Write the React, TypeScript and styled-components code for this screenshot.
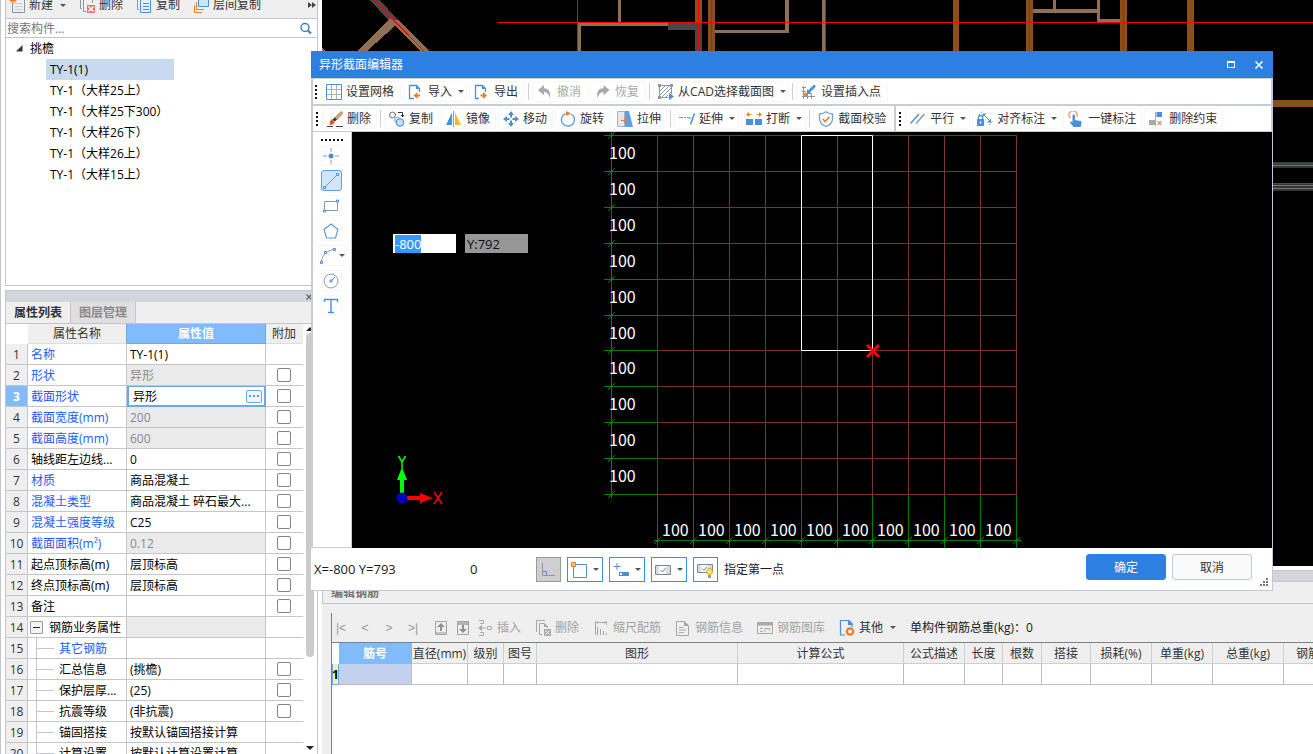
import React, { useEffect, useRef } from "react";
import styled, { createGlobalStyle, css } from "styled-components";

const GlobalStyle = createGlobalStyle`
  * { box-sizing: border-box; }
  body {
    margin: 0;
    background: #fff;
    overflow: hidden;
    color: #1a1a1a;
    font: 12px/16px "Open Sans", "Noto Sans CJK SC", sans-serif;
  }
  button, input { font: inherit; color: inherit; }
`;

const line = "#c4c6cc";
const panel = "#efefef";
const strip = "#d3d5db";
const blue = "#4a90d9";
const orange = "#f07c28";
const steel = "#8b98a3";

/* ---------- icons ---------- */

const Svg = styled.svg.attrs({ width: 16, height: 16, viewBox: "0 0 16 16", fill: "none", "aria-hidden": true })`
  flex: none;
  display: block;
`;

const icons: Record<string, React.ReactNode> = {
  newItem: (
    <>
      <path d="M4 2.500H15.500V15.500H3.500V6" stroke={steel} />
      <path d="M6 6.500h7M6 9.500h7M6 12.500h7" stroke="#c9ced3" />
      <path d="M4 0v7M0.500 3.500h7M1.500 1l5 5M6.500 1l-5 5" stroke={orange} />
    </>
  ),
  removeItem: (
    <>
      <path d="M1.500 1v10.500H3M4.500 1v13.500h3M4.500 1.500h9V6" stroke={steel} />
      <path d="M8 8h8v8H8z" fill="#e57373" />
      <path d="M9.500 9.500l5 5M14.500 9.500l-5 5" stroke="#fff" strokeWidth="1.500" />
    </>
  ),
  copyItem: (
    <>
      <path d="M1.500 1v11.500H3" stroke={steel} />
      <path d="M4.500 1.500h8l2 2v12h-10z" stroke={blue} fill="#e6f1fc" />
      <path d="M7 6.500h6M7 9.500h6M7 12.500h6" stroke={blue} />
    </>
  ),
  copyLayer: (
    <>
      <path d="M5.500 1.500h10v8h-10z" stroke={blue} fill="#cfe4fa" />
      <path d="M3.500 5v7.500H11M1.500 8v7.500H9" stroke={orange} />
    </>
  ),
  grid: (
    <>
      <path d="M5.500 1v14M10.500 1v14M1 5.500h14M1 10.500h14" stroke="#a3b5b5" />
      <path d="M.5.5h15v15H.5z" stroke={blue} />
    </>
  ),
  importFile: (
    <>
      <path d="M6 14.500H1.500V1.500H8.500L11.500 4.500V8" stroke={blue} strokeWidth="1.300" />
      <path d="M8 1v4h4z" fill={blue} />
      <path d="M5.500 11.500l4-3.500v2.500H12v2H9.500V15z" fill={orange} />
    </>
  ),
  exportFile: (
    <>
      <path d="M5 14.500H1.500V1.500H8.500L11.500 4.500V8" stroke={blue} strokeWidth="1.300" />
      <path d="M8 1v4h4z" fill={blue} />
      <path d="M13 11.500L9 8v2.500H6.500v2H9V15z" fill={orange} />
    </>
  ),
  undo: <path d="M1 6L7 1v3.300c4.500 0 6.800 3.500 6 10C12 10.500 10.500 8 7 8v3.200z" fill="#a9a9a9" />,
  redo: <path d="M14.500 6L8.500 1v3.300C4 4.300 1 7.500 2.500 14.300 3.500 10.500 5 8 8.500 8v3.200z" fill="#a9a9a9" />,
  cadSelect: (
    <>
      <path d="M2 7L7 2M2 11L11 2M3 14L14 3M7 14L14 7" stroke={steel} />
      <path d="M1.500 1.500h12v12h-12z" stroke={steel} />
      <path d="M0 0h3v3H0zM12 0h3v3h-3zM0 12h3v3H0z" fill="#8b98a3" />
      <path d="M10 8v8h6v-4z" fill="#fff" />
      <path d="M11 9v7l5-3.500z" fill={blue} />
    </>
  ),
  insertPoint: (
    <>
      <path d="M2.500 2v13M6.500 7v8M10.500 10v5M1 3.500h4M1 7.500h4M1 12.500h13" stroke={steel} />
      <path d="M14 1.500L7.500 8" stroke={blue} strokeWidth="2.600" />
      <path d="M6 5v5h5z" fill={blue} />
      <circle cx="5" cy="10.500" r="2" fill={orange} />
    </>
  ),
  brush: (
    <>
      <path d="M14.800.8c1 .8.500 2-.5 3.200L9.500 9 7.500 7l5-5C13.500 1 14.300.4 14.800.8z" fill="#d9a877" stroke="#7a5233" strokeWidth=".6" />
      <path d="M7.800 6.500l2 2-2 2.300-2.400-2.400z" fill="#3a3a3a" />
      <path d="M5 8.200l2.500 2.500c0 2.500-2.500 3.300-5 3 .3-2.800.5-4.800 2.500-5.500z" fill="#e2561e" />
      <path d="M0 15.500h6M9 15.500h7" stroke="#444" />
    </>
  ),
  copy: (
    <>
      <circle cx="3.500" cy="4" r="3" stroke="#6d7780" fill="#eef0f2" />
      <circle cx="8.500" cy="9" r="2.800" stroke="#8fa0ad" fill="#eef4fa" />
      <circle cx="11" cy="11.500" r="3.800" stroke="#3a8ed0" fill="#bfe0fa" />
      <path d="M9 1.500h4.500V5" stroke="#333" />
      <path d="M11.500 4h4l-2 2.500z" fill="#333" />
    </>
  ),
  mirror: (
    <>
      <path d="M6 1.500V14H0z" fill={blue} />
      <path d="M7.500 0v16" stroke="#999" />
      <path d="M9 1.500V14h6z" fill="#fbb829" />
    </>
  ),
  move: (
    <>
      <path d="M8 0l3 4H5zM8 16l3-4H5zM0 8l4-3v6zM16 8l-4-3v6z" fill={blue} />
      <path d="M8 3v3.500M8 9.500V13M3 8h3.500M9.500 8H13" stroke={blue} strokeWidth="2" />
    </>
  ),
  rotate: (
    <>
      <path d="M11 3a6.500 6.500 0 1 1-5.500-.3" stroke="#5b9bd8" strokeWidth="1.300" />
      <path d="M6 0l5 2.500L6 5z" fill={orange} />
    </>
  ),
  stretch: (
    <>
      <path d="M.5.5h7v15h-7z" fill="#e6e8ea" stroke="#a9b0b6" />
      <path d="M8 0h4l4 16H8z" fill="#5b9fe8" />
      <path d="M4 9.500H8" stroke={orange} strokeWidth="1.200" />
      <path d="M7.500 7l3.500 2.500L7.500 12z" fill={orange} />
    </>
  ),
  extend: (
    <>
      <path d="M0 6.500h4M5 6.500h2M8 6.500h2" stroke={steel} />
      <path d="M15.500 2.500l-4 11" stroke={blue} strokeWidth="1.500" />
      <path d="M9.500 7h3" stroke={blue} />
    </>
  ),
  split: (
    <>
      <path d="M0 3.500L3 1v2h2.500v1H3v2zM16 3.500L13 1v2h-2.500v1H13v2z" fill="#e08a1e" />
      <path d="M0 8h7v6H0zM9 8h7v6H9z" fill={blue} />
    </>
  ),
  shield: (
    <>
      <path d="M8 .8c2 1.500 4 2 6.500 2.200V8c0 4-3 6-6.500 7.500C4.500 14 1.500 12 1.500 8V3C4 2.800 6 2.300 8 .8z" stroke="#6aa5dc" strokeWidth="1.300" />
      <path d="M4.800 8l2.400 2.500 4.300-4.700" stroke={orange} strokeWidth="1.600" />
    </>
  ),
  parallel: (
    <>
      <path d="M.5 12.500L9 3" stroke={blue} strokeWidth="1.500" />
      <path d="M6 12.500L14.500 3" stroke={steel} strokeWidth="1.500" />
    </>
  ),
  align: (
    <>
      <path d="M0 8h7v7H0z" fill={blue} />
      <path d="M1.500 8V6.500a2 2 0 0 1 4 0V8" stroke={blue} strokeWidth="1.300" />
      <path d="M3.500 10.500v2" stroke="#fff" strokeWidth="1.500" />
      <path d="M2 4l4-4M12 14l4-4" stroke={steel} strokeDasharray="2 1" />
      <path d="M7 4l6 6" stroke={blue} />
      <path d="M5.500 2.500h4l-4 4zM14 11.500v-4l-4 4z" fill={blue} />
    </>
  ),
  touch: (
    <>
      <path d="M2.500 7a4 4 0 1 1 6-1" stroke="#f2a27c" strokeWidth="1.500" />
      <path d="M4.500 4.500c0-1.500 2.500-1.500 2.500 0V9l5.500 1c1 .3 1.300 1 1 2l-.8 4H5.500L2 11.500c0-1 1-1.300 2.500-.3z" fill={blue} />
    </>
  ),
  unconstrain: (
    <>
      <path d="M0 9h6v5H0z" fill="#a6a9b4" />
      <path d="M6.500 1v14" stroke="#f0a030" />
      <path d="M7.500 1H13v5H7.500z" fill={blue} />
      <path d="M8.500 10l4 4M12.500 10l-4 4" stroke="#d64a3a" />
    </>
  ),
  point: (
    <>
      <path d="M8 0v4M8 12v4M0 8h4M12 8h4" stroke={steel} />
      <circle cx="8" cy="8" r="2.500" fill={blue} />
    </>
  ),
  line: (
    <>
      <path d="M2 14L14 2" stroke={steel} />
      <path d="M.5 13.500h2v2h-2zM13.500.5h2v2h-2z" stroke={blue} fill="#fff" />
    </>
  ),
  rect: (
    <>
      <path d="M1.500 3.500h13v9h-13z" stroke={steel} />
      <path d="M.5 12h2v2h-2zM13.500 2h2v2h-2z" stroke={blue} fill="#fff" />
    </>
  ),
  pentagon: <path d="M8 1l7 5.500-2.500 8.500h-9L1 6.500z" stroke="#5b9bd8" strokeWidth="1.200" />,
  arc: (
    <>
      <path d="M1.500 14C2 7 7 2.500 14 1.500" stroke={steel} />
      <path d="M.5 13.500h2v2h-2zM4.500 3.500h2v2h-2zM13.500.5h2v2h-2z" stroke={blue} fill="#fff" />
    </>
  ),
  circle: (
    <>
      <circle cx="8" cy="8" r="7" stroke={steel} />
      <path d="M9 7l3-3" stroke={blue} />
      <path d="M7 7h2v2H7z" stroke={blue} fill="#fff" />
    </>
  ),
  textTool: <path d="M1.500 4V1.500h13V4M8 1.500v13M5 14.500h6" stroke={blue} strokeWidth="1.400" />,
  corner: (
    <>
      <path d="M2.500 1v12.500H15" stroke={steel} />
      <path d="M2.500 9.500h4v4" stroke={blue} />
    </>
  ),
  squareSnap: (
    <>
      <path d="M2.500 2.500h13v13h-13z" stroke={blue} />
      <path d="M.5.5h4v4h-4z" stroke={orange} fill="#f7b98f" />
    </>
  ),
  plusBox: (
    <>
      <path d="M4 1v7M.5 4.500h7" stroke={blue} />
      <path d="M6 10h10v4H6z" fill={blue} />
      <path d="M7 11h2v2H7z" fill="#fff" />
    </>
  ),
  tickBox: (
    <>
      <path d="M.5 3.500h15v9H.5z" stroke="#7b8790" fill="#d9dde0" />
      <path d="M4 4h7v8H4z" fill="#fff" />
      <path d="M5.500 8l2 2 3-4" stroke={blue} />
    </>
  ),
  tickBulb: (
    <>
      <path d="M.5 2.500h15v8H.5z" stroke="#7b8790" fill="#d9dde0" />
      <path d="M4 3h7v7H4z" fill="#fff" />
      <path d="M5 6.500l2 2 3-4" stroke={blue} />
      <circle cx="12.500" cy="9.500" r="3" fill="#ffe27a" stroke="#d9a520" />
      <path d="M11 13h3v3h-3z" fill="#9b9b9b" />
    </>
  ),
  moveUp: (
    <>
      <path d="M2.500 1.500h11v13h-11z" stroke="#a3a3a3" />
      <path d="M3 12h10v2H3z" fill="#c4c4c4" />
      <path d="M8 3l4 4H9v4H7V7H4z" fill="#8f8f8f" />
    </>
  ),
  moveDown: (
    <>
      <path d="M2.500 1.500h11v13h-11z" stroke="#a3a3a3" />
      <path d="M3 2h10v3H3z" fill="#b4b4b4" />
      <path d="M8 13L4 9h3V5h2v4h3z" fill="#8f8f8f" />
    </>
  ),
  insertRow: (
    <>
      <path d="M2 .5h4.500v3H3M2 15.500h4.500v-3H3" stroke="#a9a9a9" />
      <path d="M5 5v6L1 8zM4 7.500h5v1H4z" fill="#a9a9a9" />
      <path d="M10.500 6.500h4v3h-4z" stroke="#a9a9a9" />
    </>
  ),
  deleteRow: (
    <>
      <path d="M1.500 12V.5H10M7 14.500H4.500v-11h5l3 3V8" stroke="#a9a9a9" />
      <path d="M9 3v4h4zM9 9h7v7H9z" fill="#a9a9a9" />
      <path d="M10.500 10.500l4 4M14.500 10.500l-4 4" stroke="#fff" />
    </>
  ),
  scaleRebar: (
    <>
      <path d="M2.500 1v14M4.500 7v8M7.500 9v6M10.500 11v4M13.500 13v2M13.500 1v4M4 2.500h8" stroke="#a9a9a9" />
      <path d="M3 2.500l2-1.500v3zM13 2.500L11 1v3z" fill="#a9a9a9" />
    </>
  ),
  rebarInfo: (
    <>
      <path d="M1.500 1.500h8l4 4v10h-12z" stroke="#a9a9a9" />
      <path d="M9 1v5h5zM4 7h4v1H4zM4 9.500h7v1H4zM4 12h5v1H4z" fill="#a9a9a9" />
    </>
  ),
  rebarLib: (
    <>
      <path d="M.5 2.500h15v11H.5z" stroke="#a9a9a9" />
      <path d="M1 3h14v2.500H1z" fill="#a9a9a9" />
      <path d="M3 8.500h3M3 11.500h3M8 11.500v-3h5v2" stroke="#a9a9a9" />
    </>
  ),
  other: (
    <>
      <path d="M6 15H1.500V.5H10L13 3.500V7" stroke={blue} strokeWidth="1.200" />
      <path d="M9 0v5h5z" fill={blue} />
      <circle cx="11" cy="11.500" r="3" stroke={orange} strokeWidth="2" />
      <path d="M11 7v2M11 14v2M6.500 11.500h2M13.500 11.500h2M8 8.500l1 1M13 13.500l1 1M14 8.500l-1 1M9 13.500l-1 1" stroke={orange} strokeWidth="1.400" />
    </>
  ),
  search: (
    <>
      <circle cx="7" cy="6.500" r="4" stroke="#2f86bd" strokeWidth="1.400" />
      <path d="M10 9.500l3 3" stroke="#2f86bd" strokeWidth="2.200" />
    </>
  ),
};

const Icon = ({ name }: { name: string }) => <Svg>{icons[name]}</Svg>;

const Caret = styled.span`
  flex: none;
  border: 3px solid transparent;
  border-top-color: #555;
  border-bottom: 0;
`;

/* ---------- shell ---------- */

const Shell = styled.main`
  position: relative;
  display: grid;
  grid-template-columns: 322px minmax(0, 1fr);
  height: 100vh;
  overflow: hidden;
`;

const LeftColumn = styled.aside`
  display: flex;
  flex-direction: column;
  gap: 4px;
  min-height: 0;
  padding: 0 4px;
  border-left: 1px solid ${line};
`;

const RightColumn = styled.div`
  display: flex;
  flex-direction: column;
  min-width: 0;
  min-height: 0;
`;

/* ---------- component list ---------- */

const ListPanel = styled.section`
  display: flex;
  flex-direction: column;
  height: 286px;
  flex: none;
  border: 1px solid ${line};
  border-top: 0;
`;

const ListToolbar = styled.div`
  display: flex;
  align-items: flex-end;
  height: 19px;
  flex: none;
  gap: 13px;
  padding: 0 0 1px 3px;
  overflow: hidden;
  background: ${panel};
  border-bottom: 1px solid ${line};
`;

const FlatButton = styled.button<{ $off?: boolean }>`
  display: flex;
  align-items: center;
  gap: 4px;
  flex: none;
  height: 24px;
  padding: 0;
  border: 0;
  background: none;
  white-space: nowrap;
  color: ${(p) => (p.$off ? "#a3a3a3" : "#333")};
  ${Caret} { margin-left: 3px; }
`;

const MoreButton = styled(FlatButton)`
  margin-left: auto;
  padding-right: 1px;
`;

const SearchRow = styled.label`
  display: flex;
  align-items: center;
  height: 19px;
  flex: none;
  padding: 1px 3px 0 1px;
  border-bottom: 1px solid ${line};
`;

const SearchInput = styled.input`
  flex: 1;
  min-width: 0;
  padding: 0;
  border: 0;
  outline: 0;
  background: none;
  &::placeholder { color: #777; opacity: 1; }
`;

const Tree = styled.ul`
  margin: 0;
  padding: 0;
  list-style: none;
`;

const TreeRoot = styled.li`
  display: flex;
  align-items: center;
  gap: 7px;
  height: 21px;
  padding-left: 10px;
  color: #000;
`;

const TreeItem = styled.li<{ $on?: boolean }>`
  width: 128px;
  height: 21px;
  margin-left: 40px;
  padding-left: 4px;
  line-height: 21px;
  white-space: nowrap;
  color: #000;
  background: ${(p) => (p.$on ? "#c8d9f0" : "none")};
`;

/* ---------- property panel ---------- */

const PropPanel = styled.section`
  display: flex;
  flex-direction: column;
  flex: 1;
  min-height: 0;
  border: 1px solid ${line};
  border-bottom: 0;
`;

const PropStrip = styled.div`
  display: flex;
  justify-content: flex-end;
  align-items: center;
  height: 11px;
  flex: none;
  padding-right: 5px;
  background: ${strip};
`;

const StripClose = styled.button`
  display: block;
  padding: 0;
  border: 0;
  background: none;
  line-height: 0;
`;

const Tabs = styled.div`
  display: flex;
  height: 22px;
  flex: none;
  background: ${panel};
  border-bottom: 1px solid ${line};
`;

const Tab = styled.button<{ $on?: boolean }>`
  width: 65px;
  padding: 0;
  border: 0;
  border-right: 1px solid ${line};
  font-weight: 700;
  color: ${(p) => (p.$on ? "#333" : "#8a8a8a")};
  background: ${(p) => (p.$on ? panel : "#dfdfe1")};
`;

const PropBody = styled.div`
  display: flex;
  flex: 1;
  min-height: 0;
  overflow: hidden;
`;

const PropTable = styled.table`
  width: 297px;
  flex: none;
  align-self: flex-start;
  table-layout: fixed;
  border-collapse: separate;
  border-spacing: 0;
`;

const PropHead = styled.th<{ $on?: boolean; $blank?: boolean; $edge?: boolean }>`
  height: 20px;
  padding: 1px 0 0;
  font-weight: ${(p) => (p.$on ? 700 : 400)};
  color: ${(p) => (p.$on ? "#fff" : "#333")};
  background: ${(p) => (p.$on ? "#80bbfb" : p.$blank ? "#fff" : panel)};
  border-right: 1px solid ${(p) => (p.$on || p.$edge ? "#6ca8e6" : "transparent")};
  border-bottom: 1px solid ${(p) => (p.$on ? "#6ca8e6" : p.$blank ? "#fff" : "#dcdde0")};
`;

const RowNumber = styled.th<{ $on?: boolean }>`
  height: 21px;
  padding: 1px 0 0;
  font-weight: ${(p) => (p.$on ? 700 : 400)};
  color: ${(p) => (p.$on ? "#fff" : "#333")};
  background: ${(p) => (p.$on ? "#80bbfb" : panel)};
  border-right: 1px solid ${line};
  border-bottom: 1px solid ${line};
`;

const Cell = styled.td<{ $kind?: "link" | "off" | "plain"; $tree?: boolean }>`
  height: 21px;
  padding: ${(p) => (p.$tree ? 0 : 1)}px 0 0 3px;
  overflow: hidden;
  text-overflow: ellipsis;
  white-space: nowrap;
  color: ${(p) => (p.$kind === "link" ? "#1a5cff" : p.$kind === "off" ? "#8a8a8a" : "#000")};
  background: ${(p) => (p.$kind === "off" ? "#eaeaea" : "#fff")};
  border-right: 1px solid ${line};
  border-bottom: 1px solid ${line};
`;

const CheckCell = styled.td`
  padding: 0 1px 0 0;
  border-bottom: 1px solid ${line};
`;

const Check = styled.input.attrs({ type: "checkbox" })`
  display: block;
  appearance: none;
  width: 14px;
  height: 14px;
  margin: 0 auto;
  border: 1px solid #858585;
  border-radius: 2px;
  background: #fff;
`;

const EditCell = styled.td`
  padding: 0;
  border: 2px solid #6ca8e6;
  border-top-width: 1px;
`;

const EditBox = styled.div`
  display: flex;
  align-items: center;
  height: 18px;
  padding: 0 2px 0 4px;
`;

const EditInput = styled.input`
  flex: 1;
  min-width: 0;
  height: 18px;
  padding: 0;
  border: 0;
  outline: 0;
  background: none;
  color: #000;
`;

const DotsButton = styled.button`
  display: flex;
  align-items: center;
  justify-content: center;
  gap: 2px;
  width: 16px;
  height: 13px;
  padding: 0 0 1px;
  border: 1px solid #6ca8e6;
  border-radius: 2px;
  background: #eef5fd;
  i { width: 2px; height: 2px; background: #5b9bd8; }
`;

const NameBox = styled.span`
  display: flex;
  align-items: center;
  height: 20px;
`;

const Expander = styled.button`
  display: flex;
  align-items: center;
  justify-content: center;
  width: 13px;
  height: 13px;
  margin: 0 6px 0 -1px;
  padding: 0;
  flex: none;
  border: 1px solid #999;
  border-radius: 1px;
  background: #f4f4f4;
  &::after { content: ""; width: 7px; height: 1px; background: #222; }
`;

const Branch = styled.span`
  flex: none;
  width: 18px;
  height: 20px;
  margin: 0 5px;
  background:
    linear-gradient(${line}, ${line}) 0 0 / 1px 20px no-repeat,
    linear-gradient(${line}, ${line}) 0 10px / 18px 1px no-repeat;
`;

const ClipText = styled.span`
  padding-top: 1px;
  overflow: hidden;
  text-overflow: ellipsis;
`;

const ScrollRail = styled.div`
  display: flex;
  flex-direction: column;
  justify-content: space-between;
  align-items: center;
  flex: 1;
  padding: 3px 1px 4px 0;
`;

const ScrollThumb = styled.div`
  width: 8px;
  height: 324px;
  margin: 2px 0 auto;
  border-radius: 4px;
  background: #cbcbcb;
`;

const ScrollArrow = styled.span<{ $up?: boolean }>`
  border: 4px solid transparent;
  ${(p) =>
    p.$up
      ? css`border-bottom-color: #222; border-top: 0;`
      : css`border-top-color: #222; border-bottom: 0;`}
`;

/* ---------- drawing view and rebar panel ---------- */

const CadView = styled.svg`
  display: block;
  width: 100%;
  flex: 1;
  min-height: 0;
  background: #000;
`;

const RebarPanel = styled.section`
  height: 188px;
  flex: none;
  padding-top: 4px;
  background: #fff;
`;

const RebarStrip = styled.div`
  height: 12px;
  background: ${strip};
  border: 1px solid ${line};
  border-right: 0;
`;

const RebarTitle = styled.h2`
  height: 22px;
  margin: 0;
  padding: 3px 0 0 8px;
  font-size: 12px;
  line-height: 16px;
  font-weight: 700;
  color: #777;
  background: ${panel};
  border-left: 1px solid ${line};
  border-bottom: 1px solid ${line};
`;

const RebarBody = styled.div`
  height: 150px;
  padding: 9px 0 0 9px;
  background: ${panel};
`;

const RebarFrame = styled.div`
  height: 141px;
  border-left: 1px solid #7c8288;
  overflow: hidden;
`;

const RebarToolbar = styled.div`
  display: flex;
  align-items: center;
  height: 29px;
  gap: 14px;
  padding: 0 0 0 3px;
  white-space: nowrap;
`;

const NavGroup = styled.div`
  display: flex;
  gap: 6px;
`;

const NavButton = styled(FlatButton)`
  justify-content: center;
  width: 16px;
  color: #999;
`;

const NavSteps = styled.div`
  display: flex;
  gap: 12px;
`;

const StepButton = styled(FlatButton)`
  justify-content: center;
  width: 12px;
  color: #999;
  font-family: "Liberation Sans", sans-serif;
`;

const RebarTableWrap = styled.div`
  height: 112px;
  background: #fff;
  border-top: 1px solid #7c8288;
  overflow: hidden;
`;

const RebarTable = styled.table`
  width: 1025px;
  table-layout: fixed;
  border-collapse: separate;
  border-spacing: 0;
`;

const RebarHead = styled.th<{ $on?: boolean }>`
  height: 21px;
  padding: 1px 0 0;
  white-space: nowrap;
  overflow: hidden;
  font-weight: ${(p) => (p.$on ? 700 : 400)};
  color: ${(p) => (p.$on ? "#fff" : "#333")};
  background: ${(p) => (p.$on ? "#80bbfb" : panel)};
  border-right: 1px solid ${(p) => (p.$on ? "#80bbfb" : "#cfcfcf")};
  border-bottom: 1px solid ${(p) => (p.$on ? "#80bbfb" : "#cfcfcf")};
`;

const RebarGutter = styled.th<{ $head?: boolean }>`
  height: 21px;
  padding: 0;
  color: #000;
  background: ${(p) => (p.$head ? "#fff" : "#ffefb0")};
  box-shadow: ${(p) => (p.$head ? "none" : "inset 1px 0 #6ca8e6, inset -1px -1px #6ca8e6")};
`;

const RebarCell = styled.td<{ $on?: boolean }>`
  height: 21px;
  padding: 0;
  background: ${(p) => (p.$on ? "#c2d1ee" : "#fff")};
  border-right: 1px solid #bdbdbd;
  border-bottom: 1px solid #bdbdbd;
`;

/* ---------- dialog ---------- */

const Dialog = styled.section`
  position: absolute;
  left: 311px;
  right: 40px;
  top: 51px;
  background: #fff;
  border-right: 1px solid #bfc8dc;
  border-bottom: 1px solid #bfc8dc;
`;

const DialogTitle = styled.header`
  display: flex;
  align-items: center;
  height: 27px;
  margin-right: -1px;
  padding: 0 9px 0 8px;
  color: #fff;
  background: #2d7fe1;
  h1 { margin: 0 auto 0 0; font-size: 12px; line-height: 16px; font-weight: 400; }
`;

const WindowButton = styled.button`
  display: block;
  margin-left: 19px;
  padding: 0;
  border: 0;
  background: none;
  line-height: 0;
`;

const DialogBody = styled.div`
  border-left: 2px solid #c9ccd3;
`;

const Toolbar = styled.div<{ $last?: boolean }>`
  display: flex;
  align-items: center;
  gap: 2px;
  height: ${(p) => (p.$last ? 26 : 28)}px;
  padding-left: ${(p) => (p.$last ? 2 : 1)}px;
  border: solid #c9ccd0;
  border-width: ${(p) => (p.$last ? "0 1px 1px 0" : "1px 1px 2px 0")};
`;

const Grip = styled.span<{ $across?: boolean }>`
  flex: none;
  width: ${(p) => (p.$across ? 22 : 2)}px;
  height: ${(p) => (p.$across ? 2 : 14)}px;
  margin: ${(p) => (p.$across ? "0 0 0 8px" : "0 2px 0 1px")};
  background: repeating-linear-gradient(
    ${(p) => (p.$across ? "to right" : "to bottom")}, #111 0 2px, transparent 2px 4px);
`;

const Divider = styled.span<{ $thick?: boolean }>`
  flex: none;
  width: ${(p) => (p.$thick ? 2 : 1)}px;
  height: ${(p) => (p.$thick ? 25 : 17)}px;
  margin: 0 ${(p) => (p.$thick ? 0 : 1)}px;
  background: ${(p) => (p.$thick ? "#c9ccd3" : "#cfcfcf")};
`;

const ToolButton = styled.button<{ $off?: boolean; $drop?: boolean; $tight?: boolean }>`
  display: flex;
  align-items: center;
  gap: 4px;
  flex: none;
  height: 21px;
  padding: 0 ${(p) => (p.$drop ? (p.$tight ? 3 : 2) : p.$tight ? 5 : 6)}px 0 4px;
  border: 1px solid #f6f6f6;
  border-radius: 3px;
  background: #fff;
  white-space: nowrap;
  color: ${(p) => (p.$off ? "#aaa" : "#333")};
  ${Caret} { margin-left: 2px; }
`;

const Workspace = styled.div`
  display: flex;
  min-height: 416px;
`;

const SideBar = styled.div`
  display: flex;
  flex-direction: column;
  align-items: flex-start;
  gap: 4px;
  width: 39px;
  flex: none;
  padding-top: 7px;
  border-right: 1px solid #c9ccd3;
  border-bottom: 1px solid #c9ccd3;
`;

const SideButton = styled.button<{ $on?: boolean; $wide?: boolean }>`
  display: flex;
  align-items: center;
  gap: 3px;
  width: ${(p) => (p.$wide ? 28 : 21)}px;
  height: 21px;
  margin-left: ${(p) => (p.$wide ? 5 : 8)}px;
  padding: 0 0 0 1px;
  border: 1px solid ${(p) => (p.$on ? "#5b9fe8" : "#f6f6f6")};
  border-radius: 3px;
  background: ${(p) => (p.$on ? "#cfe6fc" : "#fff")};
`;

const CanvasBox = styled.div`
  position: relative;
  flex: 1;
  min-width: 0;
  background: #000;
`;

const Canvas = styled.svg`
  display: block;
  width: 100%;
  height: 416px;
  text { font-family: "Noto Sans CJK SC", sans-serif; font-size: 16px; fill: #fff; }
`;

const CoordInputs = styled.div`
  position: absolute;
  left: 41px;
  top: 102px;
  display: flex;
  gap: 9px;
`;

const CoordInput = styled.input<{ $off?: boolean }>`
  width: 63px;
  height: 19px;
  padding: 0 2px;
  border: 0;
  outline: 0;
  font-size: 13px;
  color: #111;
  background: ${(p) => (p.$off ? "#969696" : "#fff")};
  &::selection { color: #fff; background: #3399ff; }
`;

const Footer = styled.footer`
  position: relative;
  display: flex;
  align-items: flex-start;
  gap: 6px;
  height: 42px;
  padding: 6px 20px 0 3px;
`;

const Coords = styled.output`
  width: 150px;
  padding-top: 7px;
  font-size: 13px;
  white-space: nowrap;
`;

const Count = styled(Coords)`
  width: 60px;
`;

const Hint = styled.p`
  margin: 0 auto 0 0;
  padding-top: 8px;
`;

const SnapButton = styled.button<{ $on?: boolean; $drop?: boolean }>`
  display: flex;
  align-items: center;
  gap: 6px;
  width: ${(p) => (p.$drop ? 36 : 25)}px;
  height: 25px;
  margin-top: 3px;
  padding: 0 3px;
  flex: none;
  border: 1px solid ${(p) => (p.$on ? "#9a9a9a" : "#3390ee")};
  background: ${(p) => (p.$on ? "#cfcfcf" : "#fff")};
`;

const ActionButton = styled.button<{ $main?: boolean }>`
  width: 80px;
  height: 26px;
  padding: 1px 0 0;
  flex: none;
  border: 1px solid ${(p) => (p.$main ? "#2d7fe1" : "#bfc8dc")};
  border-radius: 3px;
  color: ${(p) => (p.$main ? "#fff" : "#333")};
  background: ${(p) => (p.$main ? "#2d7fe1" : "#fafafa")};
`;

const ResizeGrip = styled.svg`
  position: absolute;
  right: 4px;
  bottom: 4px;
`;

/* ---------- data ---------- */

const members = ["TY-1(1)", "TY-1（大样25上）", "TY-1（大样25下300）", "TY-1（大样26下）", "TY-1（大样26上）", "TY-1（大样15上）"];

type Prop = { name: string; value: string; link?: boolean; off?: boolean; check?: boolean; level?: "group" | "child" };

const props: Prop[] = [
  { name: "名称", value: "TY-1(1)", link: true },
  { name: "形状", value: "异形", link: true, off: true, check: true },
  { name: "截面形状", value: "异形", link: true, check: true },
  { name: "截面宽度(mm)", value: "200", link: true, off: true, check: true },
  { name: "截面高度(mm)", value: "600", link: true, off: true, check: true },
  { name: "轴线距左边线...", value: "0", check: true },
  { name: "材质", value: "商品混凝土", link: true, check: true },
  { name: "混凝土类型", value: "商品混凝土 碎石最大...", link: true, check: true },
  { name: "混凝土强度等级", value: "C25", link: true, check: true },
  { name: "截面面积(m²)", value: "0.12", link: true, off: true, check: true },
  { name: "起点顶标高(m)", value: "层顶标高", check: true },
  { name: "终点顶标高(m)", value: "层顶标高", check: true },
  { name: "备注", value: "", check: true },
  { name: "钢筋业务属性", value: "", off: true, level: "group" },
  { name: "其它钢筋", value: "", link: true, level: "child" },
  { name: "汇总信息", value: "(挑檐)", check: true, level: "child" },
  { name: "保护层厚...", value: "(25)", check: true, level: "child" },
  { name: "抗震等级", value: "(非抗震)", check: true, level: "child" },
  { name: "锚固搭接", value: "按默认锚固搭接计算", level: "child" },
  { name: "计算设置", value: "按默认计算设置计算", level: "child" },
];

const rebarColumns: [string, number][] = [
  ["筋号", 73], ["直径(mm)", 56], ["级别", 36], ["图号", 33], ["图形", 201], ["计算公式", 166],
  ["公式描述", 61], ["长度", 38], ["根数", 39], ["搭接", 49], ["损耗(%)", 61], ["单重(kg)", 61],
  ["总重(kg)", 71], ["钢筋归类", 73],
];

type Tool = { icon?: string; text?: string; off?: boolean; drop?: boolean; divider?: boolean; group?: boolean };

const fileTools: Tool[] = [
  { icon: "grid", text: "设置网格" },
  { icon: "importFile", text: "导入", drop: true },
  { icon: "exportFile", text: "导出" },
  { divider: true },
  { icon: "undo", text: "撤消", off: true },
  { icon: "redo", text: "恢复", off: true },
  { divider: true },
  { icon: "cadSelect", text: "从CAD选择截面图", drop: true },
  { divider: true },
  { icon: "insertPoint", text: "设置插入点" },
];

const editTools: Tool[] = [
  { icon: "brush", text: "删除" },
  { divider: true },
  { icon: "copy", text: "复制" },
  { icon: "mirror", text: "镜像" },
  { icon: "move", text: "移动" },
  { icon: "rotate", text: "旋转" },
  { icon: "stretch", text: "拉伸" },
  { divider: true },
  { icon: "extend", text: "延伸", drop: true },
  { icon: "split", text: "打断", drop: true },
  { divider: true },
  { icon: "shield", text: "截面校验" },
  { group: true },
  { icon: "parallel", text: "平行", drop: true },
  { icon: "align", text: "对齐标注", drop: true },
  { icon: "touch", text: "一键标注" },
  { icon: "unconstrain", text: "删除约束" },
];

const drawTools = ["point", "line", "rect", "pentagon", "arc", "circle", "textTool"];

/* ---------- parts ---------- */

const Tools = ({ items, tight }: { items: Tool[]; tight?: boolean }) => (
  <>
    <Grip />
    {items.map((t, i) =>
      t.group ? (
        <React.Fragment key={i}>
          <Divider $thick />
          <Grip />
        </React.Fragment>
      ) : t.divider ? (
        <Divider key={i} />
      ) : (
        <ToolButton key={i} $off={t.off} $drop={t.drop} $tight={tight} disabled={t.off}>
          <Icon name={t.icon!} />
          {t.text}
          {t.drop && <Caret />}
        </ToolButton>
      )
    )}
  </>
);

const PropRow = ({ p, n }: { p: Prop; n: number }) => {
  const editing = n === 3;
  return (
    <tr>
      <RowNumber scope="row" $on={editing}>{n}</RowNumber>
      <Cell $kind={p.link ? "link" : "plain"} $tree={!!p.level}>
        {p.level ? (
          <NameBox>
            {p.level === "group" ? <Expander aria-label="收起" /> : <Branch />}
            <ClipText>{p.name}</ClipText>
          </NameBox>
        ) : (
          p.name
        )}
      </Cell>
      {editing ? (
        <EditCell>
          <EditBox>
            <EditInput aria-label={p.name} defaultValue={p.value} />
            <DotsButton aria-label="编辑截面"><i /><i /><i /></DotsButton>
          </EditBox>
        </EditCell>
      ) : (
        <Cell $kind={p.off ? "off" : "plain"}>{p.value}</Cell>
      )}
      <CheckCell>{p.check && <Check aria-label={`附加 ${p.name}`} />}</CheckCell>
    </tr>
  );
};

const tan = "#8f6f55";
const wood = "#8b4f1c";
const slate = "#484848";

const FloorPlan = () => (
  <CadView aria-label="平面图" shapeRendering="crispEdges">
    <path d="M47 -1L57 -1L76 20L68 22z" fill={slate} />
    <path d="M73 20h4L107 51H98L73 26L45 51H35L68 18z" fill={tan} />
    <path d="M0 48l3 3H0z" fill={tan} />
    <path d="M51 -1L102 51" stroke="#f00" />
    <path d="M256 23h90v3H259v25H256zM296 0h3v22h-3zM463 0h4v33H393v-3h70zM500 0h3v51h-3z" fill={tan} />
    <path d="M346 23h34v28h-7V30h-27z" fill={slate} />
    <path d="M373 0h7v22h-7zM386 0h7v51h-7zM631 0h6v51h-6zM704 0h7v51h-7zM798 0h7v51h-7zM865 0h7v51h-7z" fill={wood} />
    <rect x="951" y="100" width="100%" height="7" fill={wood} />
    <path d="M731 0h3v9h41V0h3v19h20v3h-23v-9h-64V9h20z" fill={tan} />
    <path d="M175 22.500H3000M255.500 0v51M376.500 0v51M389.500 0v51M503.500 0v51M707.500 0v51M801.500 0v51" stroke="#f00" />
    <rect x="951" y="162" width="100%" height="6" fill="#333" />
    <rect x="951" y="184" width="100%" height="7" fill="#333" />
    <path d="M951 165H3000M951 185.500H3000M951 188.500H3000" stroke="#777" />
    <path d="M951 163.500H3000M951 183.500H3000" stroke="#f00" />
  </CadView>
);

const steps = Array.from({ length: 11 }, (_, i) => Math.round(i * 35.9));

const SectionDrawing = () => (
  <Canvas aria-label="截面图">
    <g fill="#7a3338">
      {steps.map((s) => (
        <React.Fragment key={s}>
          <rect x={305 + s} y={3} width={1} height={360} />
          <rect x={305} y={3 + s} width={360} height={1} />
        </React.Fragment>
      ))}
    </g>
    <g fill="#008000">
      {steps.map((s) => (
        <React.Fragment key={s}>
          <rect x={252} y={3 + s} width={53} height={1} />
          <rect x={305 + s} y={363} width={1} height={53} />
        </React.Fragment>
      ))}
      <rect x={259} y={0} width={1} height={366} />
      <rect x={302} y={408} width={367} height={1} />
    </g>
    <g stroke="#008000">
      {steps.map((s) => (
        <path key={s} d={`M256 ${7 + s}l7 -7M${302 + s} 412l7 -7`} />
      ))}
    </g>
    {steps.slice(0, 10).map((s) => (
      <React.Fragment key={s}>
        <text x={257} y={27 + s}>100</text>
        <text x={310 + s} y={404}>100</text>
      </React.Fragment>
    ))}
    <path d="M521 218.500H449.500V3.500H520.500V218" stroke="#fff" fill="none" />
    <path d="M515 213l12 12M527 213l-12 12" stroke="#f00" strokeWidth="3" />
    <path d="M48 364V348H45L50 335L55 348H52V364z" fill="#0f0" />
    <path d="M54 364H68V361L81 366L68 371V368H54z" fill="#f00" />
    <circle cx="50" cy="366" r="5.500" fill="#0000c0" />
    <path d="M46.500 324L50 330L53.500 324M50 330V336" stroke="#0f0" strokeWidth="1.500" fill="none" />
    <path d="M82 360L90 372M90 360L82 372" stroke="#f00" strokeWidth="1.500" />
  </Canvas>
);

export default function App() {
  const xInput = useRef<HTMLInputElement>(null);
  useEffect(() => {
    xInput.current?.focus();
    xInput.current?.select();
  }, []);

  return (
    <>
      <GlobalStyle />
      <Shell>
        <LeftColumn>
          <ListPanel>
            <ListToolbar>
              <FlatButton><Icon name="newItem" />新建<Caret /></FlatButton>
              <FlatButton><Icon name="removeItem" />删除</FlatButton>
              <FlatButton><Icon name="copyItem" />复制</FlatButton>
              <FlatButton><Icon name="copyLayer" />层间复制</FlatButton>
              <MoreButton aria-label="更多">
                <svg width="8" height="6" viewBox="0 0 8 6" aria-hidden="true">
                  <path d="M0 0l4 3-4 3zM4 0l4 3-4 3z" fill="#444" />
                </svg>
              </MoreButton>
            </ListToolbar>
            <SearchRow>
              <SearchInput aria-label="搜索构件" placeholder="搜索构件..." />
              <Icon name="search" />
            </SearchRow>
            <Tree>
              <TreeRoot>
                <svg width="7" height="7" viewBox="0 0 7 7" aria-hidden="true"><path d="M6.500 0v6.500H0z" fill="#333" /></svg>
                挑檐
              </TreeRoot>
              {members.map((m, i) => <TreeItem key={m} $on={i === 0}>{m}</TreeItem>)}
            </Tree>
          </ListPanel>

          <PropPanel>
            <PropStrip>
              <StripClose aria-label="关闭">
                <svg width="6" height="6" viewBox="0 0 6 6" aria-hidden="true">
                  <path d="M.5.5l5 5M5.500.5l-5 5" stroke="#666" strokeWidth="1.300" />
                </svg>
              </StripClose>
            </PropStrip>
            <Tabs>
              <Tab $on>属性列表</Tab>
              <Tab>图层管理</Tab>
            </Tabs>
            <PropBody>
              <PropTable>
                <colgroup>
                  <col style={{ width: 22 }} />
                  <col style={{ width: 99 }} />
                  <col style={{ width: 139 }} />
                  <col style={{ width: 37 }} />
                </colgroup>
                <thead>
                  <tr>
                    <PropHead $blank />
                    <PropHead $edge>属性名称</PropHead>
                    <PropHead $on>属性值</PropHead>
                    <PropHead>附加</PropHead>
                  </tr>
                </thead>
                <tbody>
                  {props.map((p, i) => <PropRow key={p.name} p={p} n={i + 1} />)}
                </tbody>
              </PropTable>
              <ScrollRail>
                <ScrollArrow $up />
                <ScrollThumb />
                <ScrollArrow />
              </ScrollRail>
            </PropBody>
          </PropPanel>
        </LeftColumn>

        <RightColumn>
          <FloorPlan />
          <RebarPanel>
            <RebarStrip />
            <RebarTitle>编辑钢筋</RebarTitle>
            <RebarBody>
              <RebarFrame>
                <RebarToolbar>
                  <NavSteps>
                    <StepButton aria-label="首行">|&lt;</StepButton>
                    <StepButton aria-label="上一行">&lt;</StepButton>
                    <StepButton aria-label="下一行">&gt;</StepButton>
                    <StepButton aria-label="末行">&gt;|</StepButton>
                  </NavSteps>
                  <NavGroup>
                    <NavButton aria-label="上移"><Icon name="moveUp" /></NavButton>
                    <NavButton aria-label="下移"><Icon name="moveDown" /></NavButton>
                    <FlatButton $off><Icon name="insertRow" />插入</FlatButton>
                  </NavGroup>
                  <FlatButton $off><Icon name="deleteRow" />删除</FlatButton>
                  <FlatButton $off><Icon name="scaleRebar" />缩尺配筋</FlatButton>
                  <FlatButton $off><Icon name="rebarInfo" />钢筋信息</FlatButton>
                  <FlatButton $off><Icon name="rebarLib" />钢筋图库</FlatButton>
                  <FlatButton><Icon name="other" />其他<Caret /></FlatButton>
                  <span>单构件钢筋总重(kg)：0</span>
                </RebarToolbar>
                <RebarTableWrap>
                  <RebarTable>
                    <colgroup>
                      <col style={{ width: 7 }} />
                      {rebarColumns.map(([t, w]) => <col key={t} style={{ width: w }} />)}
                    </colgroup>
                    <thead>
                      <tr>
                        <RebarGutter $head />
                        {rebarColumns.map(([t], i) => <RebarHead key={t} $on={i === 0}>{t}</RebarHead>)}
                      </tr>
                    </thead>
                    <tbody>
                      <tr>
                        <RebarGutter scope="row">1</RebarGutter>
                        {rebarColumns.map(([t], i) => <RebarCell key={t} $on={i === 0} />)}
                      </tr>
                    </tbody>
                  </RebarTable>
                </RebarTableWrap>
              </RebarFrame>
            </RebarBody>
          </RebarPanel>
        </RightColumn>

        <Dialog role="dialog" aria-label="异形截面编辑器">
          <DialogTitle>
            <h1>异形截面编辑器</h1>
            <WindowButton aria-label="最大化">
              <svg width="8" height="7" viewBox="0 0 8 7" aria-hidden="true">
                <path d="M.5 1v5.500h7V1M0 1h8" stroke="#fff" fill="none" />
                <path d="M0 0h8v2H0z" fill="#fff" />
              </svg>
            </WindowButton>
            <WindowButton aria-label="关闭">
              <svg width="10" height="8" viewBox="0 0 10 8" aria-hidden="true">
                <path d="M1.500.5l7 7M8.500.5l-7 7" stroke="#fff" strokeWidth="1.500" />
              </svg>
            </WindowButton>
          </DialogTitle>
          <DialogBody>
            <Toolbar><Tools items={fileTools} /></Toolbar>
            <Toolbar $last><Tools items={editTools} tight /></Toolbar>
            <Workspace>
              <SideBar>
                <Grip $across />
                {drawTools.map((t) => (
                  <SideButton key={t} aria-label={t} $on={t === "line"} $wide={t === "arc"}>
                    <Icon name={t} />
                    {t === "arc" && <Caret />}
                  </SideButton>
                ))}
              </SideBar>
              <CanvasBox>
                <SectionDrawing />
                <CoordInputs>
                  <CoordInput ref={xInput} aria-label="X" defaultValue="-800" />
                  <CoordInput $off aria-label="Y" readOnly value="Y:792" />
                </CoordInputs>
              </CanvasBox>
            </Workspace>
          </DialogBody>
          <Footer>
            <Coords>X=-800 Y=793</Coords>
            <Count>0</Count>
            <SnapButton $on aria-label="正交"><Icon name="corner" /></SnapButton>
            <SnapButton $drop aria-label="捕捉"><Icon name="squareSnap" /><Caret /></SnapButton>
            <SnapButton $drop aria-label="坐标输入"><Icon name="plusBox" /><Caret /></SnapButton>
            <SnapButton $drop aria-label="动态输入"><Icon name="tickBox" /><Caret /></SnapButton>
            <SnapButton aria-label="提示"><Icon name="tickBulb" /></SnapButton>
            <Hint>指定第一点</Hint>
            <ActionButton $main>确定</ActionButton>
            <ActionButton>取消</ActionButton>
            <ResizeGrip width="8" height="8" viewBox="0 0 8 8" aria-hidden="true">
              <path d="M6 0h2v2H6zM6 3h2v2H6zM3 3h2v2H3zM6 6h2v2H6zM3 6h2v2H3zM0 6h2v2H0z" fill="#777" />
            </ResizeGrip>
          </Footer>
        </Dialog>
      </Shell>
    </>
  );
}
